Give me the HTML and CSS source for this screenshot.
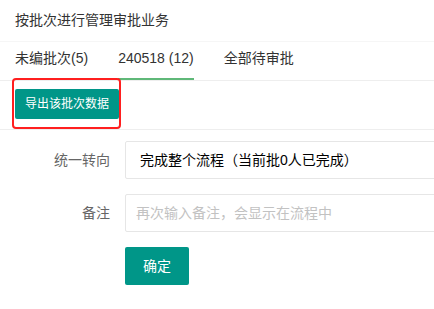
FILE: index.html
```html
<!DOCTYPE html>
<html lang="zh-CN">
<head>
<meta charset="utf-8">
<title>按批次进行管理审批业务</title>
<link rel="stylesheet" href="styles.css">
</head>
<body>
<div class="card">
  <div class="card-header">按批次进行管理审批业务</div>
  <div class="tabs">
    <ul class="tab-title">
      <li>未编批次(5)</li>
      <li class="this">240518 (12)</li>
      <li>全部待审批</li>
    </ul>
    <div class="tab-bar">
      <button type="button" class="btn btn-sm">导出该批次数据</button>
    </div>
    <span class="mark"></span>
  </div>
  <form class="form">
    <div class="form-item">
      <label class="form-label">统一转向</label>
      <div class="input-block">
        <div class="input select">完成整个流程（当前批0人已完成）</div>
      </div>
    </div>
    <div class="form-item">
      <label class="form-label">备注</label>
      <div class="input-block">
        <input class="input" type="text" placeholder="再次输入备注，会显示在流程中">
      </div>
    </div>
    <div class="form-item">
      <div class="input-block">
        <button type="button" class="btn">确定</button>
      </div>
    </div>
  </form>
</div>
</body>
</html>
```

FILE: styles.css
```css
html, body {
  margin: 0;
  padding: 0;
  background: #fff;
  overflow: hidden;
}
body {
  font-family: "Liberation Sans", "Noto Sans CJK SC", sans-serif;
  font-size: 14px;
  color: #333;
}
.card {
  overflow: hidden;
}
.card-header {
  height: 41px;
  line-height: 41px;
  padding: 0 15px;
  border-bottom: 1px solid #f6f6f6;
  color: #333;
}
.tabs {
  position: relative;
}
.tab-title {
  display: flex;
  margin: 0;
  padding: 0;
  list-style: none;
  height: 38px;
  border-bottom: 1px solid #eee;
}
.tab-title li {
  position: relative;
  padding: 0 15px;
  line-height: 33px;
  height: 38px;
  color: #333;
  white-space: nowrap;
}
.tab-title li.this::after {
  content: "";
  position: absolute;
  left: 15px;
  right: 15px;
  bottom: 0;
  height: 2px;
  background: #5fb878;
}
.tab-bar {
  padding: 8px 15px 10px;
  border-bottom: 1px solid #eee;
  display: flex;
}
.btn {
  display: inline-block;
  height: 38px;
  line-height: 38px;
  padding: 0 18px;
  background: #009688;
  color: #fff;
  border: none;
  border-radius: 2px;
  font-family: "Liberation Sans", "Noto Sans CJK SC", sans-serif;
  font-size: 14px;
  white-space: nowrap;
}
.btn-sm {
  height: 30px;
  line-height: 30px;
  padding: 0 10px;
  font-size: 12px;
}
.mark {
  position: absolute;
  left: 12px;
  top: 36px;
  width: 109px;
  height: 51px;
  box-sizing: border-box;
  border: 2px solid #ff1f1f;
  border-radius: 4px;
}
.form {
  margin-top: 11px;
  padding-left: 15px;
  overflow: hidden;
}
.form-item {
  display: flex;
  margin-bottom: 15px;
  margin-right: -80px;
}
.form-label {
  width: 80px;
  padding: 9px 15px;
  line-height: 20px;
  text-align: right;
  color: #666;
  flex: none;
}
.form-item .input-block:only-child {
  margin-left: 110px;
}
.input-block {
  flex: 1;
}
.input {
  display: block;
  box-sizing: border-box;
  width: 100%;
  height: 38px;
  line-height: 36px;
  border: 1px solid #e6e6e6;
  border-radius: 2px;
  padding: 0 10px;
  font-family: "Liberation Sans", "Noto Sans CJK SC", sans-serif;
  font-size: 14px;
  color: #000;
  background: #fff;
  outline: none;
}
.input.select {
  padding-left: 14px;
}
.input::placeholder {
  color: #c2c2c2;
}
```
